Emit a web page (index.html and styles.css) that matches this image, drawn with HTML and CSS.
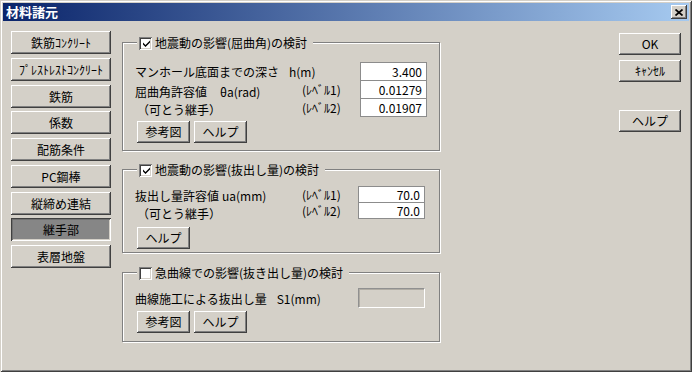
FILE: index.html
```html
<!DOCTYPE html>
<html lang="ja">
<head>
    <meta charset="UTF-8">
    <meta name="viewport" content="width=device-width, initial-scale=1.0">
    <title>材料諸元</title>
    <link rel="stylesheet" href="styles.css">
</head>
<body>
    <div class="window">
        <div class="titlebar">
            <span class="title">材料諸元</span>
            <button class="close">
                <svg width="8" height="7" viewBox="0 0 8 7"><path d="M0.5 0.5 L7.5 6.5 M7.5 0.5 L0.5 6.5" stroke="#000" stroke-width="1.7"/></svg>
            </button>
        </div>

        <div class="main">
            <!-- 左側のメニュー -->
            <div class="nav">
                <button class="btn nav-btn">鉄筋ｺﾝｸﾘｰﾄ</button>
                <button class="btn nav-btn">ﾌﾟﾚｽﾄﾚｽﾄｺﾝｸﾘｰﾄ</button>
                <button class="btn nav-btn">鉄筋</button>
                <button class="btn nav-btn">係数</button>
                <button class="btn nav-btn">配筋条件</button>
                <button class="btn nav-btn">PC鋼棒</button>
                <button class="btn nav-btn">縦締め連結</button>
                <button class="btn nav-btn pressed">継手部</button>
                <button class="btn nav-btn">表層地盤</button>
            </div>

            <div class="groups">
                <!-- 屈曲角 -->
                <fieldset class="group g-angle">
                    <legend>
                        <span class="check"><svg width="7" height="7" viewBox="0 0 7 7"><path d="M0 2.5 L2.5 5 L7 0.5 L7 2.5 L2.5 7 L0 4.5 Z"/></svg></span>
                        <span>地震動の影響(屈曲角)の検討</span>
                    </legend>
                    <div class="rows">
                        <span class="lbl span-cols">マンホール底面までの深さ<span class="unit">h(m)</span></span>
                        <input class="num" type="text" value="3.400">
                        <span class="lbl two-line"><span class="line">屈曲角許容値<span class="unit wide">θa(rad)</span></span><span class="line sub">（可とう継手）</span></span>
                        <span class="lvl">(ﾚﾍﾞﾙ1)</span>
                        <input class="num" type="text" value="0.01279">
                        <span class="lvl">(ﾚﾍﾞﾙ2)</span>
                        <input class="num" type="text" value="0.01907">
                    </div>
                    <div class="btn-row">
                        <button class="btn small">参考図</button>
                        <button class="btn small">ヘルプ</button>
                    </div>
                </fieldset>

                <!-- 抜出し量 -->
                <fieldset class="group g-pull narrow">
                    <legend>
                        <span class="check"><svg width="7" height="7" viewBox="0 0 7 7"><path d="M0 2.5 L2.5 5 L7 0.5 L7 2.5 L2.5 7 L0 4.5 Z"/></svg></span>
                        <span>地震動の影響(抜出し量)の検討</span>
                    </legend>
                    <div class="rows">
                        <span class="lbl two-line"><span class="line">抜出し量許容値<span class="unit tight">ua(mm)</span></span><span class="line sub">（可とう継手）</span></span>
                        <span class="lvl">(ﾚﾍﾞﾙ1)</span>
                        <input class="num" type="text" value="70.0">
                        <span class="lvl">(ﾚﾍﾞﾙ2)</span>
                        <input class="num" type="text" value="70.0">
                    </div>
                    <div class="btn-row">
                        <button class="btn small">ヘルプ</button>
                    </div>
                </fieldset>

                <!-- 急曲線 -->
                <fieldset class="group g-curve narrow">
                    <legend>
                        <span class="check off"></span>
                        <span>急曲線での影響(抜き出し量)の検討</span>
                    </legend>
                    <div class="rows">
                        <span class="lbl span-cols">曲線施工による抜出し量<span class="unit">S1(mm)</span></span>
                        <input class="num" type="text" value="" disabled>
                    </div>
                    <div class="btn-row">
                        <button class="btn small">参考図</button>
                        <button class="btn small">ヘルプ</button>
                    </div>
                </fieldset>
            </div>

            <div class="side">
                <button class="btn side-btn">OK</button>
                <button class="btn side-btn">ｷｬﾝｾﾙ</button>
                <button class="btn side-btn help">ヘルプ</button>
            </div>
        </div>
    </div>
</body>
</html>
```

FILE: styles.css
```css
* {
    margin: 0;
    padding: 0;
    box-sizing: border-box;
}

body {
    font-family: "Noto Sans CJK JP", "Noto Sans", sans-serif;
    font-size: 12px;
    color: #000;
    background: #d4d0c8;
    overflow: hidden;
}

.window {
    width: 692px;
    height: 372px;
    padding: 3px;
    background: #d4d0c8;
    box-shadow: inset 1px 1px #d4d0c8, inset -1px -1px #404040,
                inset 2px 2px #fff, inset -2px -2px #808080;
}

.titlebar {
    height: 18px;
    display: flex;
    align-items: center;
    justify-content: space-between;
    padding: 0 2px 0 3px;
    background: linear-gradient(to right, #0a246a 0%, #a6caf0 100%);
}

.title {
    color: #fff;
    font-weight: bold;
    font-size: 13px;
    line-height: 18px;
}

.close {
    width: 16px;
    height: 14px;
    display: flex;
    align-items: center;
    justify-content: center;
    border: none;
    background: #d4d0c8;
    box-shadow: inset -1px -1px #404040, inset 1px 1px #fff,
                inset -2px -2px #808080, inset 2px 2px #d4d0c8;
}

.main {
    display: flex;
    align-items: flex-start;
    padding: 10px 8px 0 8px;
}

/* ボタン共通 */
.btn {
    font-family: "Noto Sans CJK JP", "Noto Sans", sans-serif;
    font-size: 12px;
    color: #000;
    background: #d4d0c8;
    border: none;
    box-shadow: inset -1px -1px #404040, inset 1px 1px #fff,
                inset -2px -2px #808080, inset 2px 2px #d4d0c8;
    line-height: 14px;
    white-space: nowrap;
}

.nav {
    width: 100px;
    display: flex;
    flex-direction: column;
    gap: 3.75px;
}

.nav-btn {
    width: 100px;
    height: 23px;
    padding-top: 1px;
}

.nav-btn.pressed {
    background: #868686;
    box-shadow: inset 1px 1px #404040, inset -1px -1px #fff,
                inset 2px 2px #707070, inset -2px -2px #d4d0c8;
}

.groups {
    width: 318px;
    margin-left: 11px;
    padding-top: 3px;
    display: flex;
    flex-direction: column;
}

.group {
    border: 1px solid #808080;
    box-shadow: inset 1px 1px #fff, 1px 1px #fff;
    padding: 12px 12px 7px 12px;
    min-width: 0;
}

.group.narrow {
    padding-right: 14px;
}

.group legend {
    display: flex;
    align-items: flex-end;
    height: 16px;
    margin-left: 2px;
    padding: 0 6px 0 2px;
    background: #d4d0c8;
    line-height: 14px;
    gap: 3px;
}

.check {
    width: 13px;
    height: 13px;
    display: flex;
    align-items: center;
    justify-content: center;
    background: #fff;
    box-shadow: inset 1px 1px #808080, inset -1px -1px #fff,
                inset 2px 2px #404040, inset -2px -2px #d4d0c8;
}

.check svg {
    margin-left: 1px;
}

.rows {
    display: grid;
    grid-template-columns: 1fr 58px 67px;
    grid-auto-rows: 18px;
    align-items: center;
}

.g-pull .rows {
    grid-template-columns: 1fr 56px 67px;
    grid-auto-rows: 16px;
}

.g-curve .rows {
    grid-template-columns: 1fr 56px 67px;
    grid-auto-rows: 20px;
}

.lbl {
    line-height: 15px;
    white-space: nowrap;
}

.span-cols {
    grid-column: span 2;
}

.two-line {
    grid-row: span 2;
    align-self: end;
    display: flex;
    flex-direction: column;
    margin-bottom: -2px;
}

.line {
    display: block;
    height: 17.5px;
    line-height: 17.5px;
}

.g-pull .two-line {
    margin-bottom: -4px;
}

.sub {
    margin-left: 2px;
}

.unit {
    margin-left: 10px;
}

.unit.wide {
    margin-left: 13px;
}

.unit.tight {
    margin-left: 3px;
}

.lvl {
    line-height: 15px;
    white-space: nowrap;
}

.num {
    width: 67px;
    height: 19px;
    align-self: start;
    border: 1px solid #8c8c8c;
    background: #fff;
    font-family: "Noto Sans CJK JP", "Noto Sans", sans-serif;
    font-size: 12px;
    text-align: right;
    padding: 0 4px 0 2px;
    line-height: 16px;
    outline: none;
}

.g-pull .num {
    height: 17px;
    line-height: 14px;
}

.g-curve .num {
    height: 20px;
}

.num:disabled {
    background: #d4d0c8;
    border-color: #909090 #fff #fff #909090;
    box-shadow: inset 1px 1px #b0aca4;
}

.btn-row {
    display: flex;
    gap: 4px;
    margin-top: 5px;
    margin-left: 2px;
}

.small {
    width: 53px;
    height: 22px;
}

.g-pull .btn-row {
    margin-top: 9px;
}

.g-pull {
    padding-top: 9px;
    padding-bottom: 3px;
}

.g-angle {
    margin-bottom: 10px;
}

.g-pull {
    margin-bottom: 11px;
}

.g-curve {
    padding-top: 8px;
    padding-bottom: 8px;
}

.g-curve .btn-row {
    margin-top: 3px;
}

.side {
    margin-left: auto;
    padding-top: 2px;
    display: flex;
    flex-direction: column;
    gap: 5px;
}

.side-btn {
    width: 62px;
    height: 22px;
}

.side-btn.help {
    margin-top: 23px;
}
```
